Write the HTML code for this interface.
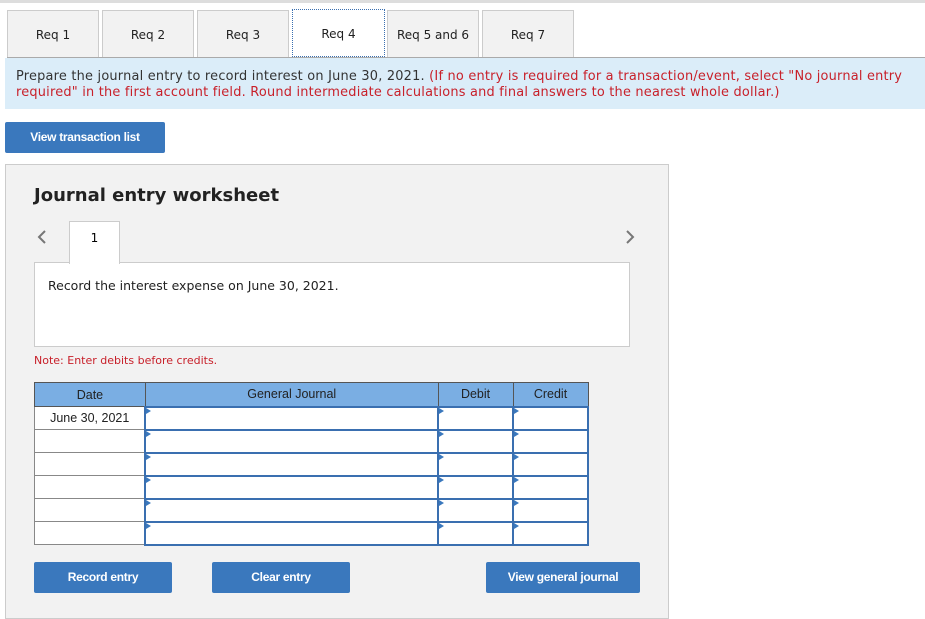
<!DOCTYPE html>
<html><head><style>
*{box-sizing:border-box;margin:0;padding:0}
body{width:925px;height:619px;background:#fff;position:relative;font-family:"DejaVu Sans",Verdana,sans-serif;overflow:hidden}
.a{position:absolute}
.tab{position:absolute;top:10px;height:47px;width:92px;background:#f2f2f2;border:1px solid #ccc;border-bottom:none;font-size:12px;color:#222;text-align:center;line-height:48px}
.btn{position:absolute;background:#3a78bd;color:#fff;font-family:"Liberation Sans",Arial,sans-serif;font-weight:bold;font-size:12px;text-align:center;line-height:31px;height:31px;border-radius:2px;letter-spacing:-0.3px}
td{border:1px solid #888;height:23px;padding:0;font-family:"Liberation Sans",Arial,sans-serif;font-size:12.5px;color:#222;text-align:center;background:#fff}
th{background:#7aaee3;border:1px solid #555;height:24px;font-family:"Liberation Sans",Arial,sans-serif;font-weight:normal;font-size:12.5px;color:#222}
td.i{border:2px solid #3a6fb0;position:relative;background:#fff}
td.i::before{content:"";position:absolute;left:0;top:0;border-left:5px solid #3a78bd;border-top:3px solid transparent;border-bottom:3px solid transparent}
</style></head><body>
<div class="a" style="left:0;top:0;width:925px;height:3px;background:#ddd"></div>
<div class="tab" style="left:7px">Req 1</div>
<div class="tab" style="left:102px">Req 2</div>
<div class="tab" style="left:197px">Req 3</div>
<div class="tab" style="left:292px;width:93px;background:#fff;border:1px dotted #3a6fb0;height:48px;top:9px">Req 4</div>
<div class="tab" style="left:387px">Req 5 and 6</div>
<div class="tab" style="left:482px">Req 7</div>
<div class="a" style="left:7px;top:57px;width:918px;height:1px;background:#aaa"></div>
<div class="a" style="left:5px;top:58px;width:920px;height:51px;background:#dbedf9;padding:11px 0 0 11px;font-size:12.9px;line-height:16px;color:#333;white-space:nowrap;letter-spacing:0.22px">Prepare the journal entry to record interest on June 30, 2021. <span style="color:#c8202a">(If no entry is required for a transaction/event, select "No journal entry<br>required" in the first account field. Round intermediate calculations and final answers to the nearest whole dollar.)</span></div>
<div class="btn" style="left:5px;top:122px;width:160px">View transaction list</div>
<div class="a" style="left:5px;top:164px;width:664px;height:455px;background:#f2f2f2;border:1px solid #ccc"></div>
<div class="a" style="left:34px;top:185px;font-size:18px;font-weight:bold;color:#222">Journal entry worksheet</div>
<svg class="a" style="left:36px;top:229px" width="12" height="16"><path d="M9 2L3 8L9 14" stroke="#777" stroke-width="2" fill="none"/></svg>
<svg class="a" style="left:624px;top:229px" width="12" height="16"><path d="M3 2L9 8L3 14" stroke="#777" stroke-width="2" fill="none"/></svg>
<div class="a" style="left:34px;top:262px;width:596px;height:85px;background:#fff;border:1px solid #ccc;padding:15px 0 0 13px;font-size:12.5px;color:#222">Record the interest expense on June 30, 2021.</div>
<div class="a" style="left:69px;top:221px;width:51px;height:43px;background:#fff;border:1px solid #ccc;border-bottom:none;text-align:center;font-size:12px;padding-top:9px">1</div>
<div class="a" style="left:34px;top:354px;font-size:11px;color:#c8202a">Note: Enter debits before credits.</div>
<table class="a" style="left:34px;top:382px;width:555px;border-collapse:collapse">
<tr><th style="width:111px">Date</th><th style="width:293px">General Journal</th><th style="width:75px">Debit</th><th style="width:75px">Credit</th></tr>
<tr><td>June 30, 2021</td><td class="i"></td><td class="i"></td><td class="i"></td></tr>
<tr><td></td><td class="i"></td><td class="i"></td><td class="i"></td></tr>
<tr><td></td><td class="i"></td><td class="i"></td><td class="i"></td></tr>
<tr><td></td><td class="i"></td><td class="i"></td><td class="i"></td></tr>
<tr><td></td><td class="i"></td><td class="i"></td><td class="i"></td></tr>
<tr><td></td><td class="i"></td><td class="i"></td><td class="i"></td></tr>
</table>
<div class="btn" style="left:34px;top:562px;width:138px">Record entry</div>
<div class="btn" style="left:212px;top:562px;width:138px">Clear entry</div>
<div class="btn" style="left:486px;top:562px;width:154px">View general journal</div>
</body></html>
